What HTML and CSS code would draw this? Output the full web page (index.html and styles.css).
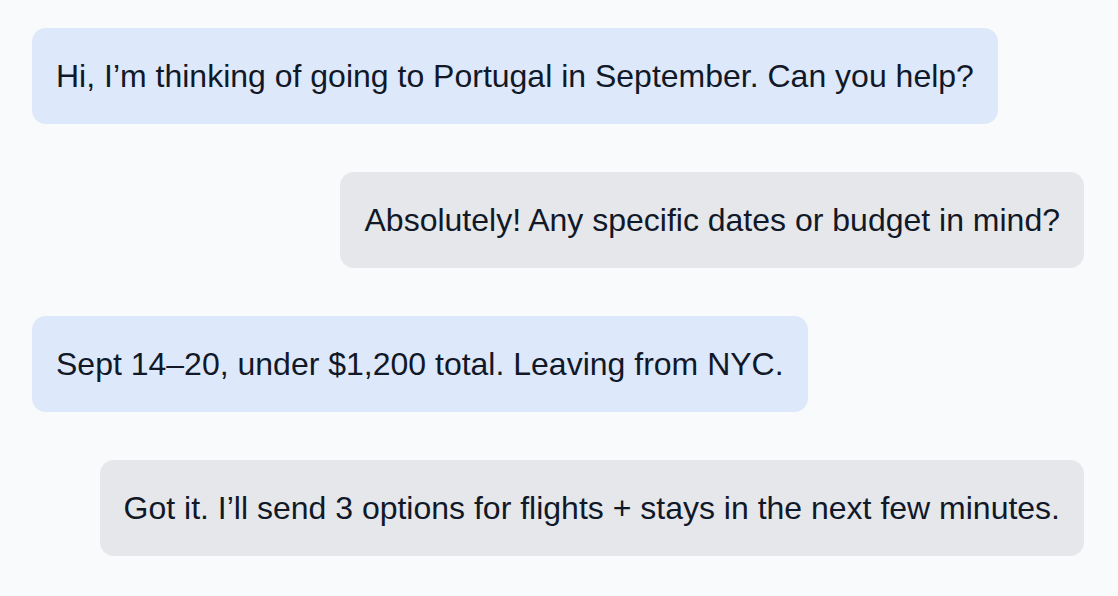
FILE: index.html
```html
<!DOCTYPE html>
<html lang="en">
<head>
    <meta charset="UTF-8">
    <meta name="viewport" content="width=device-width, initial-scale=1.0">
    <title>Chat</title>
    <link rel="stylesheet" href="styles.css">
</head>
<body>
    <main class="chat">
        <div class="msg msg-user">Hi, I’m thinking of going to Portugal in September. Can you help?</div>
        <div class="msg msg-agent">Absolutely! Any specific dates or budget in mind?</div>
        <div class="msg msg-user">Sept 14–20, under $1,200 total. Leaving from NYC.</div>
        <div class="msg msg-agent">Got it. I’ll send 3 options for flights + stays in the next few minutes.</div>
    </main>
</body>
</html>
```

FILE: styles.css
```css
* {
    margin: 0;
    padding: 0;
    box-sizing: border-box;
}

body {
    background-color: #f9fafb;
    color: #111827;
    font-family: 'Liberation Sans', Arial, sans-serif;
}

.chat {
    display: flex;
    flex-direction: column;
    gap: 48px;
    padding: 28px 34px 28px 32px;
}

.msg {
    font-size: 32px;
    line-height: 48px;
    padding: 24px;
    border-radius: 14px;
    max-width: 96%;
}

.msg-user {
    align-self: flex-start;
    background-color: #dde8fb;
}

.msg-agent {
    align-self: flex-end;
    background-color: #e5e7eb;
}
```
